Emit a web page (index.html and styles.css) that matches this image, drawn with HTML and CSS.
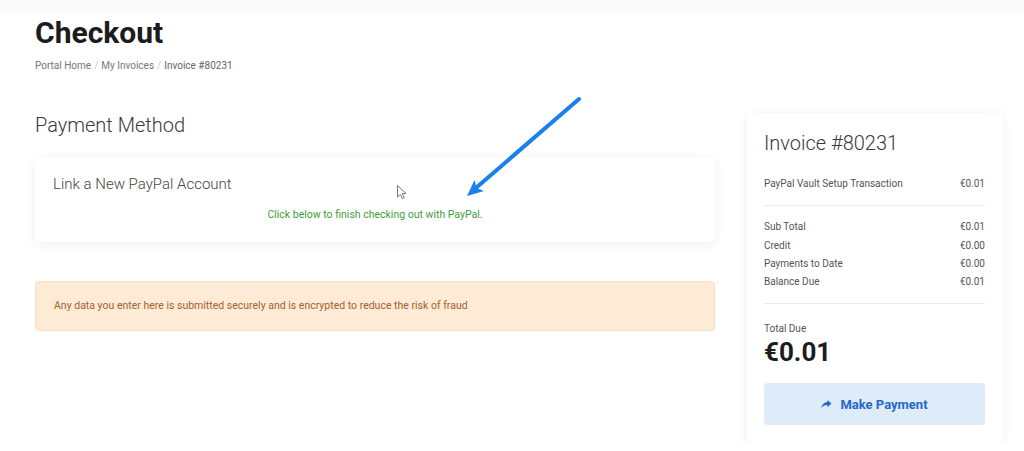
FILE: index.html
```html
<!DOCTYPE html>
<html lang="en">
    <head>
        <title>Checkout</title>
        <meta charset="utf-8" name="viewport" content="width=device-width, initial-scale=1">
        <link rel="stylesheet" href="styles.css">
    </head>
    <body>
        <div class="topbar"></div>
        <div class="page">
            <h1>Checkout</h1>
            <p class="crumbs">
                <span>Portal Home</span><span class="sep">/</span><span>My Invoices</span><span class="sep">/</span><span class="current">Invoice #80231</span>
            </p>

            <div class="checkout">
                <div class="left">
                    <h2>Payment Method</h2>
                    <div class="card paypal">
                        <h3>Link a New PayPal Account</h3>
                        <p class="hint">Click below to finish checking out with PayPal.</p>
                    </div>
                    <div class="alert">Any data you enter here is submitted securely and is encrypted to reduce the risk of fraud</div>
                </div>

                <aside class="card summary">
                    <h2>Invoice #80231</h2>
                    <div class="row item"><span>PayPal Vault Setup Transaction</span><span>€0.01</span></div>
                    <hr>
                    <div class="totals">
                        <div class="row"><span>Sub Total</span><span>€0.01</span></div>
                        <div class="row"><span>Credit</span><span>€0.00</span></div>
                        <div class="row"><span>Payments to Date</span><span>€0.00</span></div>
                        <div class="row"><span>Balance Due</span><span>€0.01</span></div>
                    </div>
                    <hr>
                    <p class="due-label">Total Due</p>
                    <p class="due">€0.01</p>
                    <button class="pay">
                        <svg width="11" height="10" viewBox="0 0 11 10"><path d="M6.5 1 L10.5 4.6 L6.5 8.2 V6.1 C3.6 6 1.8 7 0.3 9.2 C0.8 5.8 2.8 3.4 6.5 3.1 Z" fill="currentColor"/></svg>
                        Make Payment
                    </button>
                </aside>
            </div>
        </div>

        <!-- annotation arrow and mouse pointer on top of the page -->
        <svg class="overlay" width="1024" height="451" viewBox="0 0 1024 451">
            <line x1="579" y1="99" x2="477" y2="187" stroke="#1a7ff0" stroke-width="4" stroke-linecap="round"/>
            <polygon points="467,196 474.5,180 476.5,188 484,191" fill="#1a7ff0"/>
            <path d="M397.5 185.5 L397.5 197 L400.3 194.4 L402.4 198.6 L404.2 197.7 L402.2 193.6 L406 193.4 Z" fill="#fff" stroke="#777" stroke-width="1"/>
        </svg>
    </body>
</html>
```

FILE: styles.css
```css
body{
    margin: 0;
    background: #fff;
    font-family: Roboto, "Liberation Sans", sans-serif;
    color: #333;
    position: relative;
}
.topbar{
    height: 13px;
    background: #fafafa;
}
.page{
    padding: 2px 21px 0 35px;
}
h1{
    margin: 0;
    font-size: 30px;
    line-height: 36px;
    font-weight: 700;
    color: #1c1c1c;
}
.crumbs{
    margin: 7px 0 0;
    font-size: 10px;
    line-height: 16px;
    color: #777;
}
.crumbs .sep{
    color: #ccc;
    margin: 0 3px;
}
.crumbs .current{
    color: #666;
}
.checkout{
    display: grid;
    grid-template-columns: 680px 256px;
    gap: 32px;
    margin-top: 39px;
    align-items: start;
}
.left h2{
    margin: 0;
    font-size: 20px;
    line-height: 24px;
    font-weight: 300;
    color: #3a3a3a;
}
.card{
    background: #fff;
    border-radius: 5px;
    box-shadow: 0 2px 12px rgba(0,0,0,0.07);
}
.paypal{
    margin-top: 20px;
    padding: 17px 18px 20px;
}
.paypal h3{
    margin: 0;
    font-size: 15px;
    line-height: 20px;
    font-weight: 300;
    color: #444;
}
.hint{
    margin: 14px 0 0;
    text-align: center;
    font-size: 10.5px;
    line-height: 14px;
    color: #3f9e3a;
}
.alert{
    margin-top: 39px;
    padding: 17px 18px;
    background: #fdebd6;
    border: 1px solid #fae0c0;
    border-radius: 4px;
    font-size: 10.5px;
    line-height: 14px;
    color: #a5612a;
}
.summary{
    padding: 17px 18px 18px 17px;
}
.summary h2{
    margin: 0;
    font-size: 20px;
    line-height: 26px;
    font-weight: 300;
    color: #3a3a3a;
}
.row{
    display: flex;
    justify-content: space-between;
    font-size: 10px;
    line-height: 18.3px;
    color: #555;
}
.item{
    margin-top: 19px;
}
hr{
    border: 0;
    border-top: 1px solid #ececec;
    margin: 12px 0;
}
.due-label{
    margin: 18px 0 0;
    font-size: 10px;
    line-height: 13px;
    color: #555;
}
.due{
    margin: 2px 0 0;
    font-size: 26px;
    line-height: 30px;
    font-weight: 700;
    color: #1c1c1c;
}
.pay{
    display: flex;
    align-items: center;
    justify-content: center;
    gap: 8px;
    width: 100%;
    height: 42px;
    margin-top: 16px;
    border: 0;
    border-radius: 4px;
    background: #deebf8;
    color: #2468c8;
    font-family: inherit;
    font-size: 13px;
    font-weight: 700;
}
.overlay{
    position: absolute;
    top: 0;
    left: 0;
    pointer-events: none;
}
```
